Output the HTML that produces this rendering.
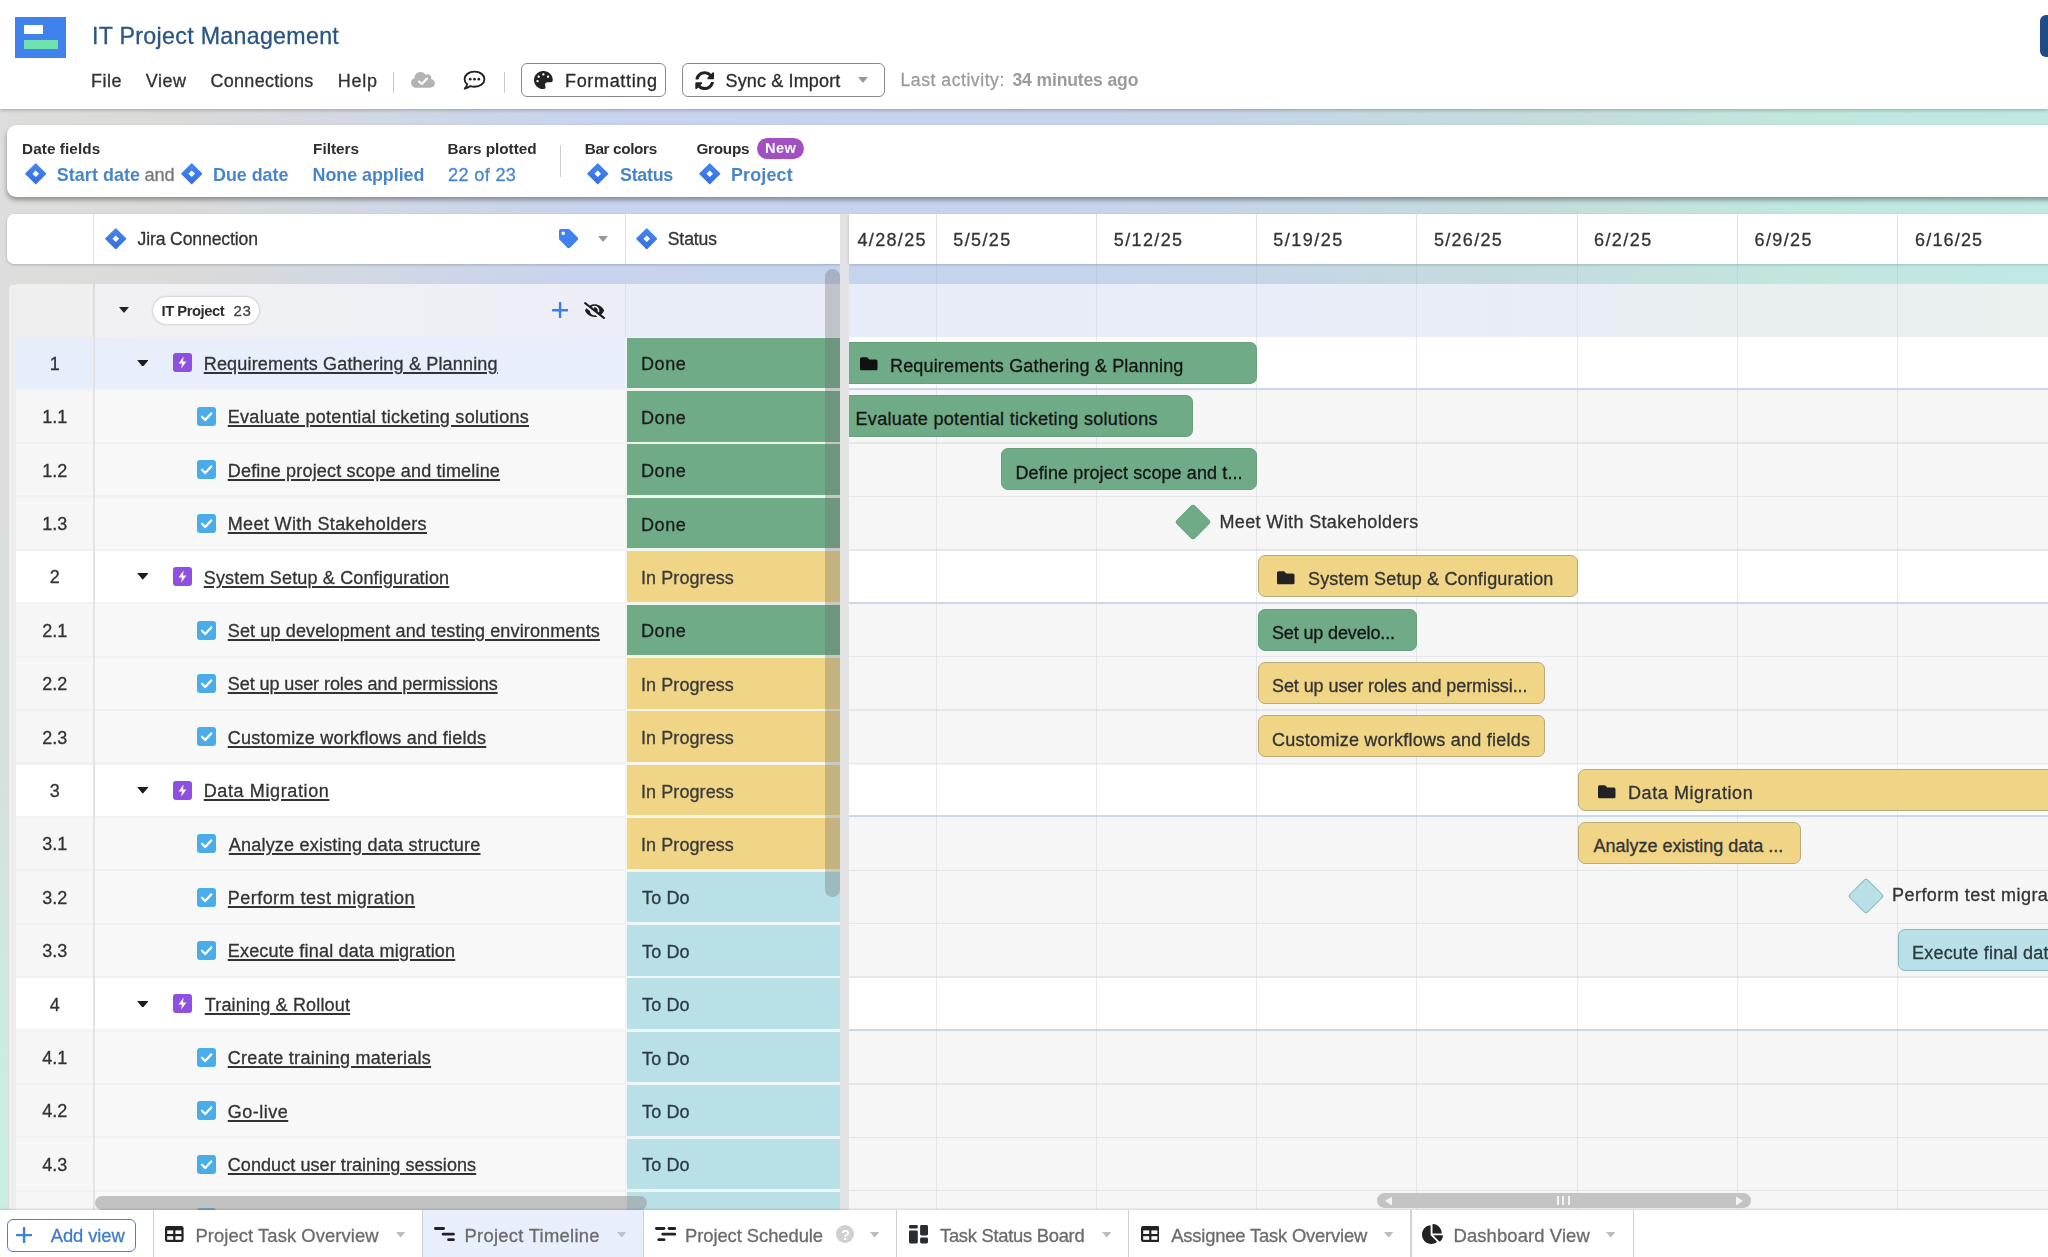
<!DOCTYPE html>
<html lang="en"><head><meta charset="utf-8"><title>IT Project Management</title>
<style>
html,body{margin:0;padding:0}
body{width:2048px;height:1257px;overflow:hidden;position:relative;font-family:"Liberation Sans",sans-serif;
background:linear-gradient(90deg,#dddddb 0%,#dadad9 9%,#d0d7e5 19%,#c8d4ed 28%,#c5d3ee 44%,#c5d5e8 60%,#c4dcdc 75%,#c1e6e0 88%,#c0e9e4 100%);}
span,a,div{box-sizing:border-box}
.u{text-decoration:underline;text-decoration-thickness:1.5px;text-underline-offset:2.1px}
</style></head><body><div id="app" style="position:absolute;left:0;top:0;width:2048px;height:1257px;opacity:0.999">
<svg width="0" height="0" style="position:absolute"><defs>
<linearGradient id="jg" x1="0" y1="0" x2="0" y2="1"><stop offset="0" stop-color="#4685ee"/><stop offset="1" stop-color="#3570dc"/></linearGradient>
</defs></svg>

<div style="position:absolute;left:0.00px;top:109.00px;width:8.00px;height:1101.00px;background:linear-gradient(180deg,#dedede 0%,#dcdcdc 30%,#d6e0da 55%,#cdeae0 80%,#c8eee2 100%);"></div>
<div style="position:absolute;left:0.00px;top:0.00px;width:2048.00px;height:108.60px;background:#fff;box-shadow:0 1px 4px rgba(0,0,0,0.28);"></div>
<div style="position:absolute;left:15.20px;top:16.60px;width:51.00px;height:41.40px;background:#3f82ee;"></div>
<div style="position:absolute;left:23.80px;top:25.40px;width:18.80px;height:8.80px;background:#fff;"></div>
<div style="position:absolute;left:23.80px;top:40.00px;width:33.80px;height:9.20px;background:#6fe0b0;"></div>
<span id="t1" style="-webkit-text-stroke:0.3px;position:absolute;left:92.00px;top:23.96px;line-height:24px;font-size:23.2px;font-weight:400;color:#2a5583;white-space:nowrap;letter-spacing:0.310px;">IT Project Management</span>
<span id="t2" style="-webkit-text-stroke:0.3px;position:absolute;left:91.00px;top:68.66px;line-height:24px;font-size:18px;font-weight:400;color:#333;white-space:nowrap;letter-spacing:0.533px;">File</span>
<span id="t3" style="-webkit-text-stroke:0.3px;position:absolute;left:145.75px;top:68.66px;line-height:24px;font-size:18px;font-weight:400;color:#333;white-space:nowrap;letter-spacing:0.534px;">View</span>
<span id="t4" style="-webkit-text-stroke:0.3px;position:absolute;left:210.50px;top:68.66px;line-height:24px;font-size:18px;font-weight:400;color:#333;white-space:nowrap;letter-spacing:0.280px;">Connections</span>
<span id="t5" style="-webkit-text-stroke:0.3px;position:absolute;left:337.75px;top:68.66px;line-height:24px;font-size:18px;font-weight:400;color:#333;white-space:nowrap;letter-spacing:0.733px;">Help</span>
<div style="position:absolute;left:392.80px;top:72.00px;width:1.20px;height:20.60px;background:#c9c9c9;"></div>
<div style="position:absolute;left:503.70px;top:72.00px;width:1.20px;height:20.60px;background:#c9c9c9;"></div>
<svg style="position:absolute;left:411.30px;top:70.90px;" width="23.90" height="17.80" viewBox="0 0 640 512" preserveAspectRatio="none"><path fill="#b3b3b3" d="M537.6 226.6c4.1-10.7 6.4-22.4 6.4-34.6 0-53-43-96-96-96-19.7 0-38.1 6-53.3 16.2C367 64.2 315.3 32 256 32c-88.4 0-160 71.6-160 160 0 2.7.1 5.4.2 8.1C40.2 219.8 0 273.2 0 336c0 79.5 64.5 144 144 144h368c70.7 0 128-57.3 128-128 0-61.9-44-113.6-102.4-125.4z"/><path d="M215 300 L290 375 L430 215" fill="none" stroke="#fff" stroke-width="58" stroke-linecap="round" stroke-linejoin="round"/></svg>
<svg style="position:absolute;left:463.00px;top:70.30px;" width="23.00" height="20.40" viewBox="0 0 23 20" preserveAspectRatio="none"><path d="M11.5 1.6 C17.3 1.6 21.4 5 21.4 9 C21.4 13 17.3 16.4 11.5 16.4 C10 16.4 8.6 16.2 7.4 15.8 C6 16.9 4 18 1.8 18.2 C3 17 3.9 15.4 4.2 14.1 C2.6 12.8 1.6 11 1.6 9 C1.6 5 5.700 1.6 11.5 1.6 Z" fill="none" stroke="#222" stroke-width="1.9" stroke-linejoin="round"/><circle cx="7.2" cy="9" r="1.35" fill="#222"/><circle cx="11.5" cy="9" r="1.35" fill="#222"/><circle cx="15.8" cy="9" r="1.35" fill="#222"/></svg>
<div style="position:absolute;left:521px;top:63.2px;width:144.6px;height:33.8px;border:1.3px solid #8a8a8a;border-radius:6px;background:#fff"></div>
<svg style="position:absolute;left:534.20px;top:71.00px;" width="18.80" height="18.20" viewBox="0 0 512 512" preserveAspectRatio="none"><path fill="#222" d="M204.3 5C104.900 24.4 24.8 104.300 5.2 203.400c-37 187 131.700 326.400 258.800 306.700 41.200-6.400 61.400-54.600 42.500-91.700-23.100-45.400 9.900-98.400 60.900-98.400h79.700c35.800 0 64.800-29.600 64.900-65.300C511.500 97.100 368.100-26.900 204.300 5zM96 320c-17.700 0-32-14.300-32-32s14.300-32 32-32 32 14.300 32 32-14.300 32-32 32zm32-128c-17.700 0-32-14.300-32-32s14.300-32 32-32 32 14.300 32 32-14.300 32-32 32zm128-64c-17.700 0-32-14.300-32-32s14.300-32 32-32 32 14.300 32 32-14.300 32-32 32zm128 64c-17.700 0-32-14.300-32-32s14.300-32 32-32 32 14.300 32 32-14.300 32-32 32z"/></svg>
<span id="t6" style="-webkit-text-stroke:0.3px;position:absolute;left:565.00px;top:68.66px;line-height:24px;font-size:18px;font-weight:400;color:#2b2b2b;white-space:nowrap;letter-spacing:0.667px;">Formatting</span>
<div style="position:absolute;left:682px;top:63.2px;width:203px;height:33.6px;border:1.3px solid #8a8a8a;border-radius:6px;background:#fff"></div>
<svg style="position:absolute;left:694.80px;top:70.60px;" width="19.40" height="19.40" viewBox="0 0 512 512" preserveAspectRatio="none"><path fill="#222" d="M370.72 133.280C339.458 104.008 298.888 87.962 255.848 88c-77.458.068-144.328 53.178-162.791 126.850-1.344 5.363-6.122 9.150-11.651 9.150H24.103c-7.498 0-13.194-6.807-11.807-14.176C33.933 94.924 134.813 8 256 8c66.448 0 126.791 26.136 171.315 68.685L463.030 40.970C478.149 25.851 504 36.559 504 57.941V192c0 13.255-10.745 24-24 24H345.941c-21.382 0-32.090-25.851-16.971-40.971l41.750-41.749zM32 296h134.059c21.382 0 32.090 25.851 16.971 40.971l-41.750 41.750c31.262 29.273 71.835 45.319 114.876 45.280 77.418-.070 144.315-53.144 162.787-126.849 1.344-5.363 6.122-9.150 11.651-9.150h57.304c7.498 0 13.194 6.807 11.807 14.176C478.067 417.076 377.187 504 256 504c-66.448 0-126.791-26.136-171.315-68.685L48.970 471.030C33.851 486.149 8 475.441 8 454.059V320c0-13.255 10.745-24 24-24z"/></svg>
<span id="t7" style="-webkit-text-stroke:0.3px;position:absolute;left:725.50px;top:68.66px;line-height:24px;font-size:18px;font-weight:400;color:#2b2b2b;white-space:nowrap;letter-spacing:0.150px;">Sync &amp; Import</span>
<svg style="position:absolute;left:857.50px;top:77.20px;" width="10.00" height="6.00" viewBox="0 0 10 6" preserveAspectRatio="none"><path d="M0.6 0 H9.4 Q10 0 9.6 0.5 L5.4 5.6 Q5 6 4.6 5.6 L0.4 0.5 Q0 0 0.6 0Z" fill="#999"/></svg>
<span id="t8" style="-webkit-text-stroke:0.3px;position:absolute;left:900.50px;top:67.90px;line-height:24px;font-size:17.6px;font-weight:400;color:#9b9b9b;white-space:nowrap;letter-spacing:0.538px;">Last activity:</span>
<span id="t9" style="position:absolute;left:1012.50px;top:67.90px;line-height:24px;font-size:17.6px;font-weight:700;color:#9b9b9b;white-space:nowrap;letter-spacing:-0.169px;">34 minutes ago</span>
<div style="position:absolute;left:2040.40px;top:15.20px;width:12.00px;height:41.40px;background:#1f4b87;border-radius:6px 0 0 6px;"></div>
<div style="position:absolute;left:6.8px;top:125.3px;width:2060px;height:72px;background:#fff;border-radius:9px;box-shadow:0 3px 5px rgba(0,0,0,0.36)"></div>
<span id="t10" style="position:absolute;left:22.00px;top:136.50px;line-height:24px;font-size:15.3px;font-weight:700;color:#2e2e2e;white-space:nowrap;letter-spacing:0.080px;">Date fields</span>
<svg style="position:absolute;left:24.85px;top:163.05px;" width="21.50" height="21.50" viewBox="0 0 24 24" preserveAspectRatio="none"><path d="M12 1 L23 12 L12 23 L1 12 Z" fill="url(#jg)" stroke="url(#jg)" stroke-width="1.6" stroke-linejoin="round"/><path d="M12 8.3 L15.7 12 L12 15.7 L8.3 12 Z" fill="#fff"/></svg>
<span id="t11" style="position:absolute;left:56.75px;top:162.70px;line-height:24px;font-size:17.9px;font-weight:700;color:#4885cb;white-space:nowrap;letter-spacing:0.089px;">Start date</span>
<span id="t12" style="-webkit-text-stroke:0.3px;position:absolute;left:144.50px;top:162.59px;line-height:24px;font-size:18.2px;font-weight:400;color:#777;white-space:nowrap;letter-spacing:-0.100px;">and</span>
<svg style="position:absolute;left:180.85px;top:163.05px;" width="21.50" height="21.50" viewBox="0 0 24 24" preserveAspectRatio="none"><path d="M12 1 L23 12 L12 23 L1 12 Z" fill="url(#jg)" stroke="url(#jg)" stroke-width="1.6" stroke-linejoin="round"/><path d="M12 8.3 L15.7 12 L12 15.7 L8.3 12 Z" fill="#fff"/></svg>
<span id="t13" style="position:absolute;left:213.00px;top:162.70px;line-height:24px;font-size:17.9px;font-weight:700;color:#4885cb;white-space:nowrap;letter-spacing:-0.028px;">Due date</span>
<span id="t14" style="position:absolute;left:313.00px;top:136.50px;line-height:24px;font-size:15.3px;font-weight:700;color:#2e2e2e;white-space:nowrap;letter-spacing:0.033px;">Filters</span>
<span id="t15" style="position:absolute;left:312.50px;top:162.70px;line-height:24px;font-size:17.9px;font-weight:700;color:#4885cb;white-space:nowrap;letter-spacing:-0.036px;">None applied</span>
<span id="t16" style="position:absolute;left:447.50px;top:136.50px;line-height:24px;font-size:15.3px;font-weight:700;color:#2e2e2e;white-space:nowrap;letter-spacing:-0.018px;">Bars plotted</span>
<span id="t17" style="-webkit-text-stroke:0.3px;position:absolute;left:448.00px;top:162.59px;line-height:24px;font-size:18.2px;font-weight:400;color:#4a86cf;white-space:nowrap;letter-spacing:0.314px;">22 of 23</span>
<div style="position:absolute;left:560.00px;top:145.40px;width:1.20px;height:31.60px;background:#cfcfcf;"></div>
<span id="t18" style="position:absolute;left:584.75px;top:136.50px;line-height:24px;font-size:15.3px;font-weight:700;color:#2e2e2e;white-space:nowrap;letter-spacing:-0.355px;">Bar colors</span>
<svg style="position:absolute;left:587.05px;top:163.05px;" width="21.50" height="21.50" viewBox="0 0 24 24" preserveAspectRatio="none"><path d="M12 1 L23 12 L12 23 L1 12 Z" fill="url(#jg)" stroke="url(#jg)" stroke-width="1.6" stroke-linejoin="round"/><path d="M12 8.3 L15.7 12 L12 15.7 L8.3 12 Z" fill="#fff"/></svg>
<span id="t19" style="position:absolute;left:620.00px;top:162.70px;line-height:24px;font-size:17.9px;font-weight:700;color:#4885cb;white-space:nowrap;letter-spacing:-0.280px;">Status</span>
<span id="t20" style="position:absolute;left:696.50px;top:136.50px;line-height:24px;font-size:15.3px;font-weight:700;color:#2e2e2e;white-space:nowrap;letter-spacing:-0.280px;">Groups</span>
<div style="position:absolute;left:757px;top:137.6px;width:46.8px;height:21.2px;border-radius:11px;background:#a24fc4"></div>
<span id="t21" style="position:absolute;left:765.00px;top:136.44px;line-height:24px;font-size:14.6px;font-weight:700;color:#fff;white-space:nowrap;letter-spacing:0.400px;">New</span>
<svg style="position:absolute;left:699.35px;top:163.05px;" width="21.50" height="21.50" viewBox="0 0 24 24" preserveAspectRatio="none"><path d="M12 1 L23 12 L12 23 L1 12 Z" fill="url(#jg)" stroke="url(#jg)" stroke-width="1.6" stroke-linejoin="round"/><path d="M12 8.3 L15.7 12 L12 15.7 L8.3 12 Z" fill="#fff"/></svg>
<span id="t22" style="position:absolute;left:731.00px;top:162.70px;line-height:24px;font-size:17.9px;font-weight:700;color:#4885cb;white-space:nowrap;letter-spacing:0.166px;">Project</span>
<div style="position:absolute;left:6.8px;top:213.6px;width:833.4px;height:50.4px;background:#fff;border-radius:7px 0 0 7px;box-shadow:0 1px 3px rgba(0,0,0,0.22)"></div>
<div style="position:absolute;left:93.30px;top:213.60px;width:1.20px;height:50.40px;background:#e2e2e2;"></div>
<div style="position:absolute;left:624.60px;top:213.60px;width:1.20px;height:50.40px;background:#e2e2e2;"></div>
<svg style="position:absolute;left:105.15px;top:227.95px;" width="21.50" height="21.50" viewBox="0 0 24 24" preserveAspectRatio="none"><path d="M12 1 L23 12 L12 23 L1 12 Z" fill="url(#jg)" stroke="url(#jg)" stroke-width="1.6" stroke-linejoin="round"/><path d="M12 8.3 L15.7 12 L12 15.7 L8.3 12 Z" fill="#fff"/></svg>
<span id="t23" style="-webkit-text-stroke:0.3px;position:absolute;left:137.50px;top:227.10px;line-height:24px;font-size:17.6px;font-weight:400;color:#333;white-space:nowrap;letter-spacing:-0.128px;">Jira Connection</span>
<svg style="position:absolute;left:558.60px;top:229.20px;" width="19.20" height="19.20" viewBox="0 0 512 512" preserveAspectRatio="none"><path fill="#3f82ee" d="M0 252.118V48C0 21.490 21.490 0 48 0h204.118a48 48 0 0 1 33.941 14.059l211.882 211.882c18.745 18.745 18.745 49.137 0 67.882L293.823 497.941c-18.745 18.745-49.137 18.745-67.882 0L14.059 286.059A48 48 0 0 1 0 252.118zM112 64c-26.510 0-48 21.490-48 48s21.490 48 48 48 48-21.490 48-48-21.490-48-48-48z"/></svg>
<svg style="position:absolute;left:598.00px;top:235.80px;" width="10.00" height="6.00" viewBox="0 0 10 6" preserveAspectRatio="none"><path d="M0.6 0 H9.4 Q10 0 9.6 0.5 L5.4 5.6 Q5 6 4.6 5.6 L0.4 0.5 Q0 0 0.6 0Z" fill="#999"/></svg>
<svg style="position:absolute;left:635.85px;top:227.95px;" width="21.50" height="21.50" viewBox="0 0 24 24" preserveAspectRatio="none"><path d="M12 1 L23 12 L12 23 L1 12 Z" fill="url(#jg)" stroke="url(#jg)" stroke-width="1.6" stroke-linejoin="round"/><path d="M12 8.3 L15.7 12 L12 15.7 L8.3 12 Z" fill="#fff"/></svg>
<span id="t24" style="-webkit-text-stroke:0.3px;position:absolute;left:667.75px;top:227.10px;line-height:24px;font-size:17.6px;font-weight:400;color:#333;white-space:nowrap;letter-spacing:-0.120px;">Status</span>
<div style="position:absolute;left:840.20px;top:213.60px;width:8.80px;height:1000.00px;background:#e3e3e5;"></div>
<div style="position:absolute;left:849px;top:213.6px;width:1210px;height:50.5px;background:#fff;box-shadow:0 1px 3px rgba(0,0,0,0.18)"></div>
<div style="position:absolute;left:936.00px;top:213.60px;width:1.00px;height:50.50px;background:#e2e2e5;"></div>
<div style="position:absolute;left:1096.00px;top:213.60px;width:1.00px;height:50.50px;background:#e2e2e5;"></div>
<div style="position:absolute;left:1256.00px;top:213.60px;width:1.00px;height:50.50px;background:#e2e2e5;"></div>
<div style="position:absolute;left:1416.00px;top:213.60px;width:1.00px;height:50.50px;background:#e2e2e5;"></div>
<div style="position:absolute;left:1577.00px;top:213.60px;width:1.00px;height:50.50px;background:#e2e2e5;"></div>
<div style="position:absolute;left:1737.00px;top:213.60px;width:1.00px;height:50.50px;background:#e2e2e5;"></div>
<div style="position:absolute;left:1897.00px;top:213.60px;width:1.00px;height:50.50px;background:#e2e2e5;"></div>
<div style="position:absolute;left:2057.00px;top:213.60px;width:1.00px;height:50.50px;background:#e2e2e5;"></div>
<span id="t25" style="-webkit-text-stroke:0.3px;position:absolute;left:857.50px;top:227.66px;line-height:24px;font-size:18px;font-weight:400;color:#333;white-space:nowrap;letter-spacing:1.333px;">4/28/25</span>
<span id="t26" style="-webkit-text-stroke:0.3px;position:absolute;left:953.25px;top:227.66px;line-height:24px;font-size:18px;font-weight:400;color:#333;white-space:nowrap;letter-spacing:1.400px;">5/5/25</span>
<span id="t27" style="-webkit-text-stroke:0.3px;position:absolute;left:1113.80px;top:227.66px;line-height:24px;font-size:18px;font-weight:400;color:#333;white-space:nowrap;letter-spacing:1.360px;">5/12/25</span>
<span id="t28" style="-webkit-text-stroke:0.3px;position:absolute;left:1273.35px;top:227.66px;line-height:24px;font-size:18px;font-weight:400;color:#333;white-space:nowrap;letter-spacing:1.487px;">5/19/25</span>
<span id="t29" style="-webkit-text-stroke:0.3px;position:absolute;left:1433.90px;top:227.66px;line-height:24px;font-size:18px;font-weight:400;color:#333;white-space:nowrap;letter-spacing:1.314px;">5/26/25</span>
<span id="t30" style="-webkit-text-stroke:0.3px;position:absolute;left:1593.95px;top:227.66px;line-height:24px;font-size:18px;font-weight:400;color:#333;white-space:nowrap;letter-spacing:1.448px;">6/2/25</span>
<span id="t31" style="-webkit-text-stroke:0.3px;position:absolute;left:1754.50px;top:227.66px;line-height:24px;font-size:18px;font-weight:400;color:#333;white-space:nowrap;letter-spacing:1.400px;">6/9/25</span>
<span id="t32" style="-webkit-text-stroke:0.3px;position:absolute;left:1915.05px;top:227.66px;line-height:24px;font-size:18px;font-weight:400;color:#333;white-space:nowrap;letter-spacing:1.160px;">6/16/25</span>
<div style="position:absolute;left:7.6px;top:283.9px;width:832.6px;height:930px;background:#eeeeee;border-radius:5px 0 0 0;border-left:1px solid #dcdcdc;border-top:1px solid #dcdcdc"></div>
<div style="position:absolute;left:15.60px;top:283.90px;width:78.00px;height:53.50px;background:#efefef;"></div>
<div style="position:absolute;left:94.00px;top:283.90px;width:531.00px;height:53.50px;background:linear-gradient(90deg,#f1f1f3 0%,#eff0f5 50%,#ebeef7 100%);"></div>
<div style="position:absolute;left:625.60px;top:283.90px;width:214.60px;height:53.50px;background:#e9edf8;"></div>
<div style="position:absolute;left:93.30px;top:283.90px;width:1.30px;height:53.50px;background:#dcdcdc;"></div>
<div style="position:absolute;left:624.60px;top:283.90px;width:1.30px;height:53.50px;background:#dcdfe6;"></div>
<svg style="position:absolute;left:119.20px;top:307.20px;" width="10.00" height="6.00" viewBox="0 0 10 6" preserveAspectRatio="none"><path d="M0.6 0 H9.4 Q10 0 9.6 0.5 L5.4 5.6 Q5 6 4.6 5.6 L0.4 0.5 Q0 0 0.6 0Z" fill="#222"/></svg>
<div style="position:absolute;left:153.3px;top:296.6px;width:106.2px;height:27.4px;border-radius:14px;background:#fff;box-shadow:0 0 2.5px rgba(0,0,0,0.3)"></div>
<span id="t33" style="position:absolute;left:161.50px;top:298.57px;line-height:24px;font-size:14.8px;font-weight:700;color:#2e2e2e;white-space:nowrap;letter-spacing:-0.467px;">IT Project</span>
<span id="t34" style="-webkit-text-stroke:0.3px;position:absolute;left:233.50px;top:298.50px;line-height:24px;font-size:15px;font-weight:400;color:#444;white-space:nowrap;letter-spacing:0.600px;">23</span>
<svg style="position:absolute;left:552.20px;top:302.00px;" width="16.20" height="16.40" viewBox="0 0 16 16" preserveAspectRatio="none"><path d="M8 1 V15 M1 8 H15" stroke="#3c7fdd" stroke-width="2.4" stroke-linecap="round"/></svg>
<svg style="position:absolute;left:584.40px;top:301.80px;" width="21.20" height="17.20" viewBox="0 0 640 512" preserveAspectRatio="none"><path fill="#1d1d1d" d="M320 400c-75.850 0-137.250-58.710-142.900-133.110L72.200 185.820c-13.790 17.300-26.480 35.590-36.720 55.590a32.350 32.350 0 0 0 0 29.190C89.710 376.410 197.070 448 320 448c26.910 0 52.870-4 77.890-10.460L346 397.390a144.130 144.130 0 0 1-26 2.610zm313.820 58.100l-110.550-85.440a331.250 331.250 0 0 0 81.250-102.070 32.350 32.350 0 0 0 0-29.190C550.290 135.590 442.930 64 320 64a308.150 308.150 0 0 0-147.320 37.700L45.460 3.370A16 16 0 0 0 23 6.180L3.370 31.450A16 16 0 0 0 6.180 53.900l588.360 454.730a16 16 0 0 0 22.460-2.810l19.640-25.270a16 16 0 0 0-2.820-22.450zm-183.720-142l-39.300-30.380A94.750 94.750 0 0 0 416 256a94.760 94.760 0 0 0-121.310-92.210A47.650 47.650 0 0 1 304 192a46.640 46.640 0 0 1-1.540 10l-73.610-56.890A142.310 142.310 0 0 1 320 112a143.920 143.920 0 0 1 144 144c0 21.630-5.290 41.790-13.900 60.110z"/></svg>
<div style="position:absolute;left:15.60px;top:337.40px;width:610.50px;height:53.40px;background:#f3f3f3;"></div>
<div style="position:absolute;left:15.60px;top:337.40px;width:77.70px;height:51.20px;background:#e6edfb;"></div>
<div style="position:absolute;left:94.60px;top:337.40px;width:530.60px;height:51.20px;background:#e8eefc;"></div>
<div style="position:absolute;left:93.30px;top:337.40px;width:1.30px;height:53.40px;background:#e3e3e3;"></div>
<div style="position:absolute;left:625.60px;top:337.40px;width:214.60px;height:53.40px;background:#eef6ee;"></div>
<div style="position:absolute;left:627.00px;top:337.60px;width:213.20px;height:50.50px;background:#6fab86;"></div>
<span id="t35" style="-webkit-text-stroke:0.3px;position:absolute;left:54.70px;top:351.76px;line-height:24px;font-size:18px;font-weight:400;color:#333;white-space:nowrap;letter-spacing:0.000px;transform:translateX(-50%);">1</span>
<span id="t36" style="-webkit-text-stroke:0.3px;position:absolute;left:641.00px;top:352.36px;line-height:24px;font-size:18px;font-weight:400;color:#1c1c1c;white-space:nowrap;letter-spacing:0.600px;">Done</span>
<svg style="position:absolute;left:136.80px;top:359.70px;" width="11.60" height="6.80" viewBox="0 0 10 6" preserveAspectRatio="none"><path d="M0.6 0 H9.4 Q10 0 9.6 0.5 L5.4 5.6 Q5 6 4.6 5.6 L0.4 0.5 Q0 0 0.6 0Z" fill="#1d1d1d"/></svg>
<svg style="position:absolute;left:173.30px;top:353.40px;" width="19.00" height="19.00" viewBox="0 0 19 19" preserveAspectRatio="none"><rect width="19" height="19" rx="3" fill="#8f4fe0"/><path d="M10.6 3.6 L5.6 10.4 H9 L8.2 15.4 L13.4 8.400 H10 Z" fill="#fff"/></svg>
<a class="u" id="t37" style="-webkit-text-stroke:0.3px;position:absolute;left:203.75px;top:352.06px;line-height:24px;font-size:18px;font-weight:400;color:#333;white-space:nowrap;letter-spacing:0.175px;">Requirements Gathering &amp; Planning</a>
<div style="position:absolute;left:15.60px;top:390.80px;width:610.50px;height:53.40px;background:#f1f1f1;"></div>
<div style="position:absolute;left:15.60px;top:390.80px;width:77.70px;height:51.20px;background:#f6f6f6;"></div>
<div style="position:absolute;left:94.60px;top:390.80px;width:530.60px;height:51.20px;background:#f8f8f8;"></div>
<div style="position:absolute;left:93.30px;top:390.80px;width:1.30px;height:53.40px;background:#e3e3e3;"></div>
<div style="position:absolute;left:625.60px;top:390.80px;width:214.60px;height:53.40px;background:#eef6ee;"></div>
<div style="position:absolute;left:627.00px;top:391.00px;width:213.20px;height:50.50px;background:#6fab86;"></div>
<span id="t38" style="-webkit-text-stroke:0.3px;position:absolute;left:54.70px;top:405.16px;line-height:24px;font-size:18px;font-weight:400;color:#333;white-space:nowrap;letter-spacing:0.000px;transform:translateX(-50%);">1.1</span>
<span id="t39" style="-webkit-text-stroke:0.3px;position:absolute;left:641.00px;top:405.76px;line-height:24px;font-size:18px;font-weight:400;color:#1c1c1c;white-space:nowrap;letter-spacing:0.600px;">Done</span>
<svg style="position:absolute;left:197.30px;top:407.00px;" width="19.00" height="19.00" viewBox="0 0 19 19" preserveAspectRatio="none"><rect width="19" height="19" rx="3" fill="#4bade8"/><path d="M5 9.800 L8.2 13 L14.2 6.400" fill="none" stroke="#fff" stroke-width="2.3" stroke-linecap="round" stroke-linejoin="round"/></svg>
<a class="u" id="t40" style="-webkit-text-stroke:0.3px;position:absolute;left:227.75px;top:405.46px;line-height:24px;font-size:18px;font-weight:400;color:#333;white-space:nowrap;letter-spacing:0.292px;">Evaluate potential ticketing solutions</a>
<div style="position:absolute;left:15.60px;top:444.20px;width:610.50px;height:53.40px;background:#f1f1f1;"></div>
<div style="position:absolute;left:15.60px;top:444.20px;width:77.70px;height:51.20px;background:#f6f6f6;"></div>
<div style="position:absolute;left:94.60px;top:444.20px;width:530.60px;height:51.20px;background:#f8f8f8;"></div>
<div style="position:absolute;left:93.30px;top:444.20px;width:1.30px;height:53.40px;background:#e3e3e3;"></div>
<div style="position:absolute;left:625.60px;top:444.20px;width:214.60px;height:53.40px;background:#eef6ee;"></div>
<div style="position:absolute;left:627.00px;top:444.40px;width:213.20px;height:50.50px;background:#6fab86;"></div>
<span id="t41" style="-webkit-text-stroke:0.3px;position:absolute;left:54.70px;top:458.56px;line-height:24px;font-size:18px;font-weight:400;color:#333;white-space:nowrap;letter-spacing:0.000px;transform:translateX(-50%);">1.2</span>
<span id="t42" style="-webkit-text-stroke:0.3px;position:absolute;left:641.00px;top:459.16px;line-height:24px;font-size:18px;font-weight:400;color:#1c1c1c;white-space:nowrap;letter-spacing:0.600px;">Done</span>
<svg style="position:absolute;left:197.30px;top:460.40px;" width="19.00" height="19.00" viewBox="0 0 19 19" preserveAspectRatio="none"><rect width="19" height="19" rx="3" fill="#4bade8"/><path d="M5 9.800 L8.2 13 L14.2 6.400" fill="none" stroke="#fff" stroke-width="2.3" stroke-linecap="round" stroke-linejoin="round"/></svg>
<a class="u" id="t43" style="-webkit-text-stroke:0.3px;position:absolute;left:227.75px;top:458.86px;line-height:24px;font-size:18px;font-weight:400;color:#333;white-space:nowrap;letter-spacing:0.187px;">Define project scope and timeline</a>
<div style="position:absolute;left:15.60px;top:497.60px;width:610.50px;height:53.40px;background:#f1f1f1;"></div>
<div style="position:absolute;left:15.60px;top:497.60px;width:77.70px;height:51.20px;background:#f6f6f6;"></div>
<div style="position:absolute;left:94.60px;top:497.60px;width:530.60px;height:51.20px;background:#f8f8f8;"></div>
<div style="position:absolute;left:93.30px;top:497.60px;width:1.30px;height:53.40px;background:#e3e3e3;"></div>
<div style="position:absolute;left:625.60px;top:497.60px;width:214.60px;height:53.40px;background:#eef6ee;"></div>
<div style="position:absolute;left:627.00px;top:497.80px;width:213.20px;height:50.50px;background:#6fab86;"></div>
<span id="t44" style="-webkit-text-stroke:0.3px;position:absolute;left:54.70px;top:511.96px;line-height:24px;font-size:18px;font-weight:400;color:#333;white-space:nowrap;letter-spacing:0.000px;transform:translateX(-50%);">1.3</span>
<span id="t45" style="-webkit-text-stroke:0.3px;position:absolute;left:641.00px;top:512.56px;line-height:24px;font-size:18px;font-weight:400;color:#1c1c1c;white-space:nowrap;letter-spacing:0.600px;">Done</span>
<svg style="position:absolute;left:197.30px;top:513.80px;" width="19.00" height="19.00" viewBox="0 0 19 19" preserveAspectRatio="none"><rect width="19" height="19" rx="3" fill="#4bade8"/><path d="M5 9.800 L8.2 13 L14.2 6.400" fill="none" stroke="#fff" stroke-width="2.3" stroke-linecap="round" stroke-linejoin="round"/></svg>
<a class="u" id="t46" style="-webkit-text-stroke:0.3px;position:absolute;left:227.75px;top:512.26px;line-height:24px;font-size:18px;font-weight:400;color:#333;white-space:nowrap;letter-spacing:0.371px;">Meet With Stakeholders</a>
<div style="position:absolute;left:15.60px;top:551.00px;width:610.50px;height:53.40px;background:#f3f3f3;"></div>
<div style="position:absolute;left:15.60px;top:551.00px;width:77.70px;height:51.20px;background:#ffffff;"></div>
<div style="position:absolute;left:94.60px;top:551.00px;width:530.60px;height:51.20px;background:#ffffff;"></div>
<div style="position:absolute;left:93.30px;top:551.00px;width:1.30px;height:53.40px;background:#e3e3e3;"></div>
<div style="position:absolute;left:625.60px;top:551.00px;width:214.60px;height:53.40px;background:#f6f6ec;"></div>
<div style="position:absolute;left:627.00px;top:551.20px;width:213.20px;height:50.50px;background:#f0d586;"></div>
<span id="t47" style="-webkit-text-stroke:0.3px;position:absolute;left:54.70px;top:565.36px;line-height:24px;font-size:18px;font-weight:400;color:#333;white-space:nowrap;letter-spacing:0.000px;transform:translateX(-50%);">2</span>
<span id="t48" style="-webkit-text-stroke:0.3px;position:absolute;left:641.00px;top:565.96px;line-height:24px;font-size:18px;font-weight:400;color:#3a3a3a;white-space:nowrap;letter-spacing:0.080px;">In Progress</span>
<svg style="position:absolute;left:136.80px;top:573.30px;" width="11.60" height="6.80" viewBox="0 0 10 6" preserveAspectRatio="none"><path d="M0.6 0 H9.4 Q10 0 9.6 0.5 L5.4 5.6 Q5 6 4.6 5.6 L0.4 0.5 Q0 0 0.6 0Z" fill="#1d1d1d"/></svg>
<svg style="position:absolute;left:173.30px;top:567.00px;" width="19.00" height="19.00" viewBox="0 0 19 19" preserveAspectRatio="none"><rect width="19" height="19" rx="3" fill="#8f4fe0"/><path d="M10.6 3.6 L5.6 10.4 H9 L8.2 15.4 L13.4 8.400 H10 Z" fill="#fff"/></svg>
<a class="u" id="t49" style="-webkit-text-stroke:0.3px;position:absolute;left:203.75px;top:565.66px;line-height:24px;font-size:18px;font-weight:400;color:#333;white-space:nowrap;letter-spacing:0.155px;">System Setup &amp; Configuration</a>
<div style="position:absolute;left:15.60px;top:604.40px;width:610.50px;height:53.40px;background:#f1f1f1;"></div>
<div style="position:absolute;left:15.60px;top:604.40px;width:77.70px;height:51.20px;background:#f6f6f6;"></div>
<div style="position:absolute;left:94.60px;top:604.40px;width:530.60px;height:51.20px;background:#f8f8f8;"></div>
<div style="position:absolute;left:93.30px;top:604.40px;width:1.30px;height:53.40px;background:#e3e3e3;"></div>
<div style="position:absolute;left:625.60px;top:604.40px;width:214.60px;height:53.40px;background:#eef6ee;"></div>
<div style="position:absolute;left:627.00px;top:604.60px;width:213.20px;height:50.50px;background:#6fab86;"></div>
<span id="t50" style="-webkit-text-stroke:0.3px;position:absolute;left:54.70px;top:618.76px;line-height:24px;font-size:18px;font-weight:400;color:#333;white-space:nowrap;letter-spacing:0.000px;transform:translateX(-50%);">2.1</span>
<span id="t51" style="-webkit-text-stroke:0.3px;position:absolute;left:641.00px;top:619.36px;line-height:24px;font-size:18px;font-weight:400;color:#1c1c1c;white-space:nowrap;letter-spacing:0.600px;">Done</span>
<svg style="position:absolute;left:197.30px;top:620.60px;" width="19.00" height="19.00" viewBox="0 0 19 19" preserveAspectRatio="none"><rect width="19" height="19" rx="3" fill="#4bade8"/><path d="M5 9.800 L8.2 13 L14.2 6.400" fill="none" stroke="#fff" stroke-width="2.3" stroke-linecap="round" stroke-linejoin="round"/></svg>
<a class="u" id="t52" style="-webkit-text-stroke:0.3px;position:absolute;left:227.75px;top:619.06px;line-height:24px;font-size:18px;font-weight:400;color:#333;white-space:nowrap;letter-spacing:0.138px;">Set up development and testing environments</a>
<div style="position:absolute;left:15.60px;top:657.80px;width:610.50px;height:53.40px;background:#f1f1f1;"></div>
<div style="position:absolute;left:15.60px;top:657.80px;width:77.70px;height:51.20px;background:#f6f6f6;"></div>
<div style="position:absolute;left:94.60px;top:657.80px;width:530.60px;height:51.20px;background:#f8f8f8;"></div>
<div style="position:absolute;left:93.30px;top:657.80px;width:1.30px;height:53.40px;background:#e3e3e3;"></div>
<div style="position:absolute;left:625.60px;top:657.80px;width:214.60px;height:53.40px;background:#f6f6ec;"></div>
<div style="position:absolute;left:627.00px;top:658.00px;width:213.20px;height:50.50px;background:#f0d586;"></div>
<span id="t53" style="-webkit-text-stroke:0.3px;position:absolute;left:54.70px;top:672.16px;line-height:24px;font-size:18px;font-weight:400;color:#333;white-space:nowrap;letter-spacing:0.000px;transform:translateX(-50%);">2.2</span>
<span id="t54" style="-webkit-text-stroke:0.3px;position:absolute;left:641.00px;top:672.76px;line-height:24px;font-size:18px;font-weight:400;color:#3a3a3a;white-space:nowrap;letter-spacing:0.080px;">In Progress</span>
<svg style="position:absolute;left:197.30px;top:674.00px;" width="19.00" height="19.00" viewBox="0 0 19 19" preserveAspectRatio="none"><rect width="19" height="19" rx="3" fill="#4bade8"/><path d="M5 9.800 L8.2 13 L14.2 6.400" fill="none" stroke="#fff" stroke-width="2.3" stroke-linecap="round" stroke-linejoin="round"/></svg>
<a class="u" id="t55" style="-webkit-text-stroke:0.3px;position:absolute;left:227.75px;top:672.46px;line-height:24px;font-size:18px;font-weight:400;color:#333;white-space:nowrap;letter-spacing:-0.069px;">Set up user roles and permissions</a>
<div style="position:absolute;left:15.60px;top:711.20px;width:610.50px;height:53.40px;background:#f1f1f1;"></div>
<div style="position:absolute;left:15.60px;top:711.20px;width:77.70px;height:51.20px;background:#f6f6f6;"></div>
<div style="position:absolute;left:94.60px;top:711.20px;width:530.60px;height:51.20px;background:#f8f8f8;"></div>
<div style="position:absolute;left:93.30px;top:711.20px;width:1.30px;height:53.40px;background:#e3e3e3;"></div>
<div style="position:absolute;left:625.60px;top:711.20px;width:214.60px;height:53.40px;background:#f6f6ec;"></div>
<div style="position:absolute;left:627.00px;top:711.40px;width:213.20px;height:50.50px;background:#f0d586;"></div>
<span id="t56" style="-webkit-text-stroke:0.3px;position:absolute;left:54.70px;top:725.56px;line-height:24px;font-size:18px;font-weight:400;color:#333;white-space:nowrap;letter-spacing:0.000px;transform:translateX(-50%);">2.3</span>
<span id="t57" style="-webkit-text-stroke:0.3px;position:absolute;left:641.00px;top:726.16px;line-height:24px;font-size:18px;font-weight:400;color:#3a3a3a;white-space:nowrap;letter-spacing:0.080px;">In Progress</span>
<svg style="position:absolute;left:197.30px;top:727.40px;" width="19.00" height="19.00" viewBox="0 0 19 19" preserveAspectRatio="none"><rect width="19" height="19" rx="3" fill="#4bade8"/><path d="M5 9.800 L8.2 13 L14.2 6.400" fill="none" stroke="#fff" stroke-width="2.3" stroke-linecap="round" stroke-linejoin="round"/></svg>
<a class="u" id="t58" style="-webkit-text-stroke:0.3px;position:absolute;left:227.75px;top:725.86px;line-height:24px;font-size:18px;font-weight:400;color:#333;white-space:nowrap;letter-spacing:0.248px;">Customize workflows and fields</a>
<div style="position:absolute;left:15.60px;top:764.60px;width:610.50px;height:53.40px;background:#f3f3f3;"></div>
<div style="position:absolute;left:15.60px;top:764.60px;width:77.70px;height:51.20px;background:#ffffff;"></div>
<div style="position:absolute;left:94.60px;top:764.60px;width:530.60px;height:51.20px;background:#ffffff;"></div>
<div style="position:absolute;left:93.30px;top:764.60px;width:1.30px;height:53.40px;background:#e3e3e3;"></div>
<div style="position:absolute;left:625.60px;top:764.60px;width:214.60px;height:53.40px;background:#f6f6ec;"></div>
<div style="position:absolute;left:627.00px;top:764.80px;width:213.20px;height:50.50px;background:#f0d586;"></div>
<span id="t59" style="-webkit-text-stroke:0.3px;position:absolute;left:54.70px;top:778.96px;line-height:24px;font-size:18px;font-weight:400;color:#333;white-space:nowrap;letter-spacing:0.000px;transform:translateX(-50%);">3</span>
<span id="t60" style="-webkit-text-stroke:0.3px;position:absolute;left:641.00px;top:779.56px;line-height:24px;font-size:18px;font-weight:400;color:#3a3a3a;white-space:nowrap;letter-spacing:0.080px;">In Progress</span>
<svg style="position:absolute;left:136.80px;top:786.90px;" width="11.60" height="6.80" viewBox="0 0 10 6" preserveAspectRatio="none"><path d="M0.6 0 H9.4 Q10 0 9.6 0.5 L5.4 5.6 Q5 6 4.6 5.6 L0.4 0.5 Q0 0 0.6 0Z" fill="#1d1d1d"/></svg>
<svg style="position:absolute;left:173.30px;top:780.60px;" width="19.00" height="19.00" viewBox="0 0 19 19" preserveAspectRatio="none"><rect width="19" height="19" rx="3" fill="#8f4fe0"/><path d="M10.6 3.6 L5.6 10.4 H9 L8.2 15.4 L13.4 8.400 H10 Z" fill="#fff"/></svg>
<a class="u" id="t61" style="-webkit-text-stroke:0.3px;position:absolute;left:203.75px;top:779.26px;line-height:24px;font-size:18px;font-weight:400;color:#333;white-space:nowrap;letter-spacing:0.615px;">Data Migration</a>
<div style="position:absolute;left:15.60px;top:818.00px;width:610.50px;height:53.40px;background:#f1f1f1;"></div>
<div style="position:absolute;left:15.60px;top:818.00px;width:77.70px;height:51.20px;background:#f6f6f6;"></div>
<div style="position:absolute;left:94.60px;top:818.00px;width:530.60px;height:51.20px;background:#f8f8f8;"></div>
<div style="position:absolute;left:93.30px;top:818.00px;width:1.30px;height:53.40px;background:#e3e3e3;"></div>
<div style="position:absolute;left:625.60px;top:818.00px;width:214.60px;height:53.40px;background:#f6f6ec;"></div>
<div style="position:absolute;left:627.00px;top:818.20px;width:213.20px;height:50.50px;background:#f0d586;"></div>
<span id="t62" style="-webkit-text-stroke:0.3px;position:absolute;left:54.70px;top:832.36px;line-height:24px;font-size:18px;font-weight:400;color:#333;white-space:nowrap;letter-spacing:0.000px;transform:translateX(-50%);">3.1</span>
<span id="t63" style="-webkit-text-stroke:0.3px;position:absolute;left:641.00px;top:832.96px;line-height:24px;font-size:18px;font-weight:400;color:#3a3a3a;white-space:nowrap;letter-spacing:0.080px;">In Progress</span>
<svg style="position:absolute;left:197.30px;top:834.20px;" width="19.00" height="19.00" viewBox="0 0 19 19" preserveAspectRatio="none"><rect width="19" height="19" rx="3" fill="#4bade8"/><path d="M5 9.800 L8.2 13 L14.2 6.400" fill="none" stroke="#fff" stroke-width="2.3" stroke-linecap="round" stroke-linejoin="round"/></svg>
<a class="u" id="t64" style="-webkit-text-stroke:0.3px;position:absolute;left:228.75px;top:832.66px;line-height:24px;font-size:18px;font-weight:400;color:#333;white-space:nowrap;letter-spacing:0.213px;">Analyze existing data structure</a>
<div style="position:absolute;left:15.60px;top:871.40px;width:610.50px;height:53.40px;background:#f1f1f1;"></div>
<div style="position:absolute;left:15.60px;top:871.40px;width:77.70px;height:51.20px;background:#f6f6f6;"></div>
<div style="position:absolute;left:94.60px;top:871.40px;width:530.60px;height:51.20px;background:#f8f8f8;"></div>
<div style="position:absolute;left:93.30px;top:871.40px;width:1.30px;height:53.40px;background:#e3e3e3;"></div>
<div style="position:absolute;left:625.60px;top:871.40px;width:214.60px;height:53.40px;background:#eef6f8;"></div>
<div style="position:absolute;left:627.00px;top:871.60px;width:213.20px;height:50.50px;background:#b8e0e6;"></div>
<span id="t65" style="-webkit-text-stroke:0.3px;position:absolute;left:54.70px;top:885.76px;line-height:24px;font-size:18px;font-weight:400;color:#333;white-space:nowrap;letter-spacing:0.000px;transform:translateX(-50%);">3.2</span>
<span id="t66" style="-webkit-text-stroke:0.3px;position:absolute;left:642.00px;top:886.36px;line-height:24px;font-size:18px;font-weight:400;color:#2d3b43;white-space:nowrap;letter-spacing:0.150px;">To Do</span>
<svg style="position:absolute;left:197.30px;top:887.60px;" width="19.00" height="19.00" viewBox="0 0 19 19" preserveAspectRatio="none"><rect width="19" height="19" rx="3" fill="#4bade8"/><path d="M5 9.800 L8.2 13 L14.2 6.400" fill="none" stroke="#fff" stroke-width="2.3" stroke-linecap="round" stroke-linejoin="round"/></svg>
<a class="u" id="t67" style="-webkit-text-stroke:0.3px;position:absolute;left:227.75px;top:886.06px;line-height:24px;font-size:18px;font-weight:400;color:#333;white-space:nowrap;letter-spacing:0.467px;">Perform test migration</a>
<div style="position:absolute;left:15.60px;top:924.80px;width:610.50px;height:53.40px;background:#f1f1f1;"></div>
<div style="position:absolute;left:15.60px;top:924.80px;width:77.70px;height:51.20px;background:#f6f6f6;"></div>
<div style="position:absolute;left:94.60px;top:924.80px;width:530.60px;height:51.20px;background:#f8f8f8;"></div>
<div style="position:absolute;left:93.30px;top:924.80px;width:1.30px;height:53.40px;background:#e3e3e3;"></div>
<div style="position:absolute;left:625.60px;top:924.80px;width:214.60px;height:53.40px;background:#eef6f8;"></div>
<div style="position:absolute;left:627.00px;top:925.00px;width:213.20px;height:50.50px;background:#b8e0e6;"></div>
<span id="t68" style="-webkit-text-stroke:0.3px;position:absolute;left:54.70px;top:939.16px;line-height:24px;font-size:18px;font-weight:400;color:#333;white-space:nowrap;letter-spacing:0.000px;transform:translateX(-50%);">3.3</span>
<span id="t69" style="-webkit-text-stroke:0.3px;position:absolute;left:642.00px;top:939.76px;line-height:24px;font-size:18px;font-weight:400;color:#2d3b43;white-space:nowrap;letter-spacing:0.150px;">To Do</span>
<svg style="position:absolute;left:197.30px;top:941.00px;" width="19.00" height="19.00" viewBox="0 0 19 19" preserveAspectRatio="none"><rect width="19" height="19" rx="3" fill="#4bade8"/><path d="M5 9.800 L8.2 13 L14.2 6.400" fill="none" stroke="#fff" stroke-width="2.3" stroke-linecap="round" stroke-linejoin="round"/></svg>
<a class="u" id="t70" style="-webkit-text-stroke:0.3px;position:absolute;left:227.75px;top:939.46px;line-height:24px;font-size:18px;font-weight:400;color:#333;white-space:nowrap;letter-spacing:0.193px;">Execute final data migration</a>
<div style="position:absolute;left:15.60px;top:978.20px;width:610.50px;height:53.40px;background:#f3f3f3;"></div>
<div style="position:absolute;left:15.60px;top:978.20px;width:77.70px;height:51.20px;background:#ffffff;"></div>
<div style="position:absolute;left:94.60px;top:978.20px;width:530.60px;height:51.20px;background:#ffffff;"></div>
<div style="position:absolute;left:93.30px;top:978.20px;width:1.30px;height:53.40px;background:#e3e3e3;"></div>
<div style="position:absolute;left:625.60px;top:978.20px;width:214.60px;height:53.40px;background:#eef6f8;"></div>
<div style="position:absolute;left:627.00px;top:978.40px;width:213.20px;height:50.50px;background:#b8e0e6;"></div>
<span id="t71" style="-webkit-text-stroke:0.3px;position:absolute;left:54.70px;top:992.56px;line-height:24px;font-size:18px;font-weight:400;color:#333;white-space:nowrap;letter-spacing:0.000px;transform:translateX(-50%);">4</span>
<span id="t72" style="-webkit-text-stroke:0.3px;position:absolute;left:642.00px;top:993.16px;line-height:24px;font-size:18px;font-weight:400;color:#2d3b43;white-space:nowrap;letter-spacing:0.150px;">To Do</span>
<svg style="position:absolute;left:136.80px;top:1000.50px;" width="11.60" height="6.80" viewBox="0 0 10 6" preserveAspectRatio="none"><path d="M0.6 0 H9.4 Q10 0 9.6 0.5 L5.4 5.6 Q5 6 4.6 5.6 L0.4 0.5 Q0 0 0.6 0Z" fill="#1d1d1d"/></svg>
<svg style="position:absolute;left:173.30px;top:994.20px;" width="19.00" height="19.00" viewBox="0 0 19 19" preserveAspectRatio="none"><rect width="19" height="19" rx="3" fill="#8f4fe0"/><path d="M10.6 3.6 L5.6 10.4 H9 L8.2 15.4 L13.4 8.400 H10 Z" fill="#fff"/></svg>
<a class="u" id="t73" style="-webkit-text-stroke:0.3px;position:absolute;left:204.75px;top:992.86px;line-height:24px;font-size:18px;font-weight:400;color:#333;white-space:nowrap;letter-spacing:0.165px;">Training &amp; Rollout</a>
<div style="position:absolute;left:15.60px;top:1031.60px;width:610.50px;height:53.40px;background:#f1f1f1;"></div>
<div style="position:absolute;left:15.60px;top:1031.60px;width:77.70px;height:51.20px;background:#f6f6f6;"></div>
<div style="position:absolute;left:94.60px;top:1031.60px;width:530.60px;height:51.20px;background:#f8f8f8;"></div>
<div style="position:absolute;left:93.30px;top:1031.60px;width:1.30px;height:53.40px;background:#e3e3e3;"></div>
<div style="position:absolute;left:625.60px;top:1031.60px;width:214.60px;height:53.40px;background:#eef6f8;"></div>
<div style="position:absolute;left:627.00px;top:1031.80px;width:213.20px;height:50.50px;background:#b8e0e6;"></div>
<span id="t74" style="-webkit-text-stroke:0.3px;position:absolute;left:54.70px;top:1045.96px;line-height:24px;font-size:18px;font-weight:400;color:#333;white-space:nowrap;letter-spacing:0.000px;transform:translateX(-50%);">4.1</span>
<span id="t75" style="-webkit-text-stroke:0.3px;position:absolute;left:642.00px;top:1046.56px;line-height:24px;font-size:18px;font-weight:400;color:#2d3b43;white-space:nowrap;letter-spacing:0.150px;">To Do</span>
<svg style="position:absolute;left:197.30px;top:1047.80px;" width="19.00" height="19.00" viewBox="0 0 19 19" preserveAspectRatio="none"><rect width="19" height="19" rx="3" fill="#4bade8"/><path d="M5 9.800 L8.2 13 L14.2 6.400" fill="none" stroke="#fff" stroke-width="2.3" stroke-linecap="round" stroke-linejoin="round"/></svg>
<a class="u" id="t76" style="-webkit-text-stroke:0.3px;position:absolute;left:227.75px;top:1046.26px;line-height:24px;font-size:18px;font-weight:400;color:#333;white-space:nowrap;letter-spacing:0.291px;">Create training materials</a>
<div style="position:absolute;left:15.60px;top:1085.00px;width:610.50px;height:53.40px;background:#f1f1f1;"></div>
<div style="position:absolute;left:15.60px;top:1085.00px;width:77.70px;height:51.20px;background:#f6f6f6;"></div>
<div style="position:absolute;left:94.60px;top:1085.00px;width:530.60px;height:51.20px;background:#f8f8f8;"></div>
<div style="position:absolute;left:93.30px;top:1085.00px;width:1.30px;height:53.40px;background:#e3e3e3;"></div>
<div style="position:absolute;left:625.60px;top:1085.00px;width:214.60px;height:53.40px;background:#eef6f8;"></div>
<div style="position:absolute;left:627.00px;top:1085.20px;width:213.20px;height:50.50px;background:#b8e0e6;"></div>
<span id="t77" style="-webkit-text-stroke:0.3px;position:absolute;left:54.70px;top:1099.36px;line-height:24px;font-size:18px;font-weight:400;color:#333;white-space:nowrap;letter-spacing:0.000px;transform:translateX(-50%);">4.2</span>
<span id="t78" style="-webkit-text-stroke:0.3px;position:absolute;left:642.00px;top:1099.96px;line-height:24px;font-size:18px;font-weight:400;color:#2d3b43;white-space:nowrap;letter-spacing:0.150px;">To Do</span>
<svg style="position:absolute;left:197.30px;top:1101.20px;" width="19.00" height="19.00" viewBox="0 0 19 19" preserveAspectRatio="none"><rect width="19" height="19" rx="3" fill="#4bade8"/><path d="M5 9.800 L8.2 13 L14.2 6.400" fill="none" stroke="#fff" stroke-width="2.3" stroke-linecap="round" stroke-linejoin="round"/></svg>
<a class="u" id="t79" style="-webkit-text-stroke:0.3px;position:absolute;left:227.75px;top:1099.66px;line-height:24px;font-size:18px;font-weight:400;color:#333;white-space:nowrap;letter-spacing:0.500px;">Go-live</a>
<div style="position:absolute;left:15.60px;top:1138.40px;width:610.50px;height:53.40px;background:#f1f1f1;"></div>
<div style="position:absolute;left:15.60px;top:1138.40px;width:77.70px;height:51.20px;background:#f6f6f6;"></div>
<div style="position:absolute;left:94.60px;top:1138.40px;width:530.60px;height:51.20px;background:#f8f8f8;"></div>
<div style="position:absolute;left:93.30px;top:1138.40px;width:1.30px;height:53.40px;background:#e3e3e3;"></div>
<div style="position:absolute;left:625.60px;top:1138.40px;width:214.60px;height:53.40px;background:#eef6f8;"></div>
<div style="position:absolute;left:627.00px;top:1138.60px;width:213.20px;height:50.50px;background:#b8e0e6;"></div>
<span id="t80" style="-webkit-text-stroke:0.3px;position:absolute;left:54.70px;top:1152.76px;line-height:24px;font-size:18px;font-weight:400;color:#333;white-space:nowrap;letter-spacing:0.000px;transform:translateX(-50%);">4.3</span>
<span id="t81" style="-webkit-text-stroke:0.3px;position:absolute;left:642.00px;top:1153.36px;line-height:24px;font-size:18px;font-weight:400;color:#2d3b43;white-space:nowrap;letter-spacing:0.150px;">To Do</span>
<svg style="position:absolute;left:197.30px;top:1154.60px;" width="19.00" height="19.00" viewBox="0 0 19 19" preserveAspectRatio="none"><rect width="19" height="19" rx="3" fill="#4bade8"/><path d="M5 9.800 L8.2 13 L14.2 6.400" fill="none" stroke="#fff" stroke-width="2.3" stroke-linecap="round" stroke-linejoin="round"/></svg>
<a class="u" id="t82" style="-webkit-text-stroke:0.3px;position:absolute;left:227.75px;top:1153.06px;line-height:24px;font-size:18px;font-weight:400;color:#333;white-space:nowrap;letter-spacing:0.076px;">Conduct user training sessions</a>
<div style="position:absolute;left:15.60px;top:1191.80px;width:610.50px;height:53.40px;background:#f1f1f1;"></div>
<div style="position:absolute;left:15.60px;top:1191.80px;width:77.70px;height:51.20px;background:#f6f6f6;"></div>
<div style="position:absolute;left:94.60px;top:1191.80px;width:530.60px;height:51.20px;background:#f8f8f8;"></div>
<div style="position:absolute;left:93.30px;top:1191.80px;width:1.30px;height:53.40px;background:#e3e3e3;"></div>
<div style="position:absolute;left:625.60px;top:1191.80px;width:214.60px;height:53.40px;background:#eef6f8;"></div>
<div style="position:absolute;left:627.00px;top:1192.00px;width:213.20px;height:50.50px;background:#b8e0e6;"></div>
<svg style="position:absolute;left:197.30px;top:1208.00px;" width="19.00" height="19.00" viewBox="0 0 19 19" preserveAspectRatio="none"><rect width="19" height="19" rx="3" fill="#4bade8"/><path d="M5 9.800 L8.2 13 L14.2 6.400" fill="none" stroke="#fff" stroke-width="2.3" stroke-linecap="round" stroke-linejoin="round"/></svg>
<div style="position:absolute;left:849.00px;top:284.20px;width:1210.00px;height:53.20px;background:linear-gradient(90deg,#e7ecf9 0%,#e8edf8 40%,#e9eef2 70%,#eaf1ee 100%);"></div>
<div style="position:absolute;left:849.00px;top:337.40px;width:1210.00px;height:53.40px;background:#ffffff;"></div>
<div style="position:absolute;left:849.00px;top:388.20px;width:1210.00px;height:2.20px;background:#cdd8e6;"></div>
<div style="position:absolute;left:849.00px;top:390.20px;width:1210.00px;height:0.80px;background:#f2f4f8;"></div>
<div style="position:absolute;left:849.00px;top:390.80px;width:1210.00px;height:53.40px;background:#f6f6f6;"></div>
<div style="position:absolute;left:849.00px;top:442.40px;width:1210.00px;height:1.40px;background:#e6e7ea;"></div>
<div style="position:absolute;left:849.00px;top:444.20px;width:1210.00px;height:53.40px;background:#f6f6f6;"></div>
<div style="position:absolute;left:849.00px;top:495.80px;width:1210.00px;height:1.40px;background:#e6e7ea;"></div>
<div style="position:absolute;left:849.00px;top:497.60px;width:1210.00px;height:53.40px;background:#f6f6f6;"></div>
<div style="position:absolute;left:849.00px;top:549.20px;width:1210.00px;height:1.40px;background:#e6e7ea;"></div>
<div style="position:absolute;left:849.00px;top:551.00px;width:1210.00px;height:53.40px;background:#ffffff;"></div>
<div style="position:absolute;left:849.00px;top:601.80px;width:1210.00px;height:2.20px;background:#cdd8e6;"></div>
<div style="position:absolute;left:849.00px;top:603.80px;width:1210.00px;height:0.80px;background:#f2f4f8;"></div>
<div style="position:absolute;left:849.00px;top:604.40px;width:1210.00px;height:53.40px;background:#f6f6f6;"></div>
<div style="position:absolute;left:849.00px;top:656.00px;width:1210.00px;height:1.40px;background:#e6e7ea;"></div>
<div style="position:absolute;left:849.00px;top:657.80px;width:1210.00px;height:53.40px;background:#f6f6f6;"></div>
<div style="position:absolute;left:849.00px;top:709.40px;width:1210.00px;height:1.40px;background:#e6e7ea;"></div>
<div style="position:absolute;left:849.00px;top:711.20px;width:1210.00px;height:53.40px;background:#f6f6f6;"></div>
<div style="position:absolute;left:849.00px;top:762.80px;width:1210.00px;height:1.40px;background:#e6e7ea;"></div>
<div style="position:absolute;left:849.00px;top:764.60px;width:1210.00px;height:53.40px;background:#ffffff;"></div>
<div style="position:absolute;left:849.00px;top:815.40px;width:1210.00px;height:2.20px;background:#cdd8e6;"></div>
<div style="position:absolute;left:849.00px;top:817.40px;width:1210.00px;height:0.80px;background:#f2f4f8;"></div>
<div style="position:absolute;left:849.00px;top:818.00px;width:1210.00px;height:53.40px;background:#f6f6f6;"></div>
<div style="position:absolute;left:849.00px;top:869.60px;width:1210.00px;height:1.40px;background:#e6e7ea;"></div>
<div style="position:absolute;left:849.00px;top:871.40px;width:1210.00px;height:53.40px;background:#f6f6f6;"></div>
<div style="position:absolute;left:849.00px;top:923.00px;width:1210.00px;height:1.40px;background:#e6e7ea;"></div>
<div style="position:absolute;left:849.00px;top:924.80px;width:1210.00px;height:53.40px;background:#f6f6f6;"></div>
<div style="position:absolute;left:849.00px;top:976.40px;width:1210.00px;height:1.40px;background:#e6e7ea;"></div>
<div style="position:absolute;left:849.00px;top:978.20px;width:1210.00px;height:53.40px;background:#ffffff;"></div>
<div style="position:absolute;left:849.00px;top:1029.00px;width:1210.00px;height:2.20px;background:#cdd8e6;"></div>
<div style="position:absolute;left:849.00px;top:1031.00px;width:1210.00px;height:0.80px;background:#f2f4f8;"></div>
<div style="position:absolute;left:849.00px;top:1031.60px;width:1210.00px;height:53.40px;background:#f6f6f6;"></div>
<div style="position:absolute;left:849.00px;top:1083.20px;width:1210.00px;height:1.40px;background:#e6e7ea;"></div>
<div style="position:absolute;left:849.00px;top:1085.00px;width:1210.00px;height:53.40px;background:#f6f6f6;"></div>
<div style="position:absolute;left:849.00px;top:1136.60px;width:1210.00px;height:1.40px;background:#e6e7ea;"></div>
<div style="position:absolute;left:849.00px;top:1138.40px;width:1210.00px;height:53.40px;background:#f6f6f6;"></div>
<div style="position:absolute;left:849.00px;top:1190.00px;width:1210.00px;height:1.40px;background:#e6e7ea;"></div>
<div style="position:absolute;left:849.00px;top:1191.80px;width:1210.00px;height:53.40px;background:#f6f6f6;"></div>
<div style="position:absolute;left:849.00px;top:1243.40px;width:1210.00px;height:1.40px;background:#e6e7ea;"></div>
<div style="position:absolute;left:936.00px;top:264.20px;width:1.00px;height:20.00px;background:rgba(150,165,190,0.2);"></div>
<div style="position:absolute;left:936.00px;top:284.20px;width:1.00px;height:53.20px;background:rgba(205,210,222,0.42);"></div>
<div style="position:absolute;left:936.00px;top:337.40px;width:1.00px;height:880.00px;background:rgba(205,209,218,0.45);"></div>
<div style="position:absolute;left:1096.00px;top:264.20px;width:1.00px;height:20.00px;background:rgba(150,165,190,0.2);"></div>
<div style="position:absolute;left:1096.00px;top:284.20px;width:1.00px;height:53.20px;background:rgba(205,210,222,0.42);"></div>
<div style="position:absolute;left:1096.00px;top:337.40px;width:1.00px;height:880.00px;background:rgba(205,209,218,0.45);"></div>
<div style="position:absolute;left:1256.00px;top:264.20px;width:1.00px;height:20.00px;background:rgba(150,165,190,0.2);"></div>
<div style="position:absolute;left:1256.00px;top:284.20px;width:1.00px;height:53.20px;background:rgba(205,210,222,0.42);"></div>
<div style="position:absolute;left:1256.00px;top:337.40px;width:1.00px;height:880.00px;background:rgba(205,209,218,0.45);"></div>
<div style="position:absolute;left:1416.00px;top:264.20px;width:1.00px;height:20.00px;background:rgba(150,165,190,0.2);"></div>
<div style="position:absolute;left:1416.00px;top:284.20px;width:1.00px;height:53.20px;background:rgba(205,210,222,0.42);"></div>
<div style="position:absolute;left:1416.00px;top:337.40px;width:1.00px;height:880.00px;background:rgba(205,209,218,0.45);"></div>
<div style="position:absolute;left:1577.00px;top:264.20px;width:1.00px;height:20.00px;background:rgba(150,165,190,0.2);"></div>
<div style="position:absolute;left:1577.00px;top:284.20px;width:1.00px;height:53.20px;background:rgba(205,210,222,0.42);"></div>
<div style="position:absolute;left:1577.00px;top:337.40px;width:1.00px;height:880.00px;background:rgba(205,209,218,0.45);"></div>
<div style="position:absolute;left:1737.00px;top:264.20px;width:1.00px;height:20.00px;background:rgba(150,165,190,0.2);"></div>
<div style="position:absolute;left:1737.00px;top:284.20px;width:1.00px;height:53.20px;background:rgba(205,210,222,0.42);"></div>
<div style="position:absolute;left:1737.00px;top:337.40px;width:1.00px;height:880.00px;background:rgba(205,209,218,0.45);"></div>
<div style="position:absolute;left:1897.00px;top:264.20px;width:1.00px;height:20.00px;background:rgba(150,165,190,0.2);"></div>
<div style="position:absolute;left:1897.00px;top:284.20px;width:1.00px;height:53.20px;background:rgba(205,210,222,0.42);"></div>
<div style="position:absolute;left:1897.00px;top:337.40px;width:1.00px;height:880.00px;background:rgba(205,209,218,0.45);"></div>
<div style="position:absolute;left:2057.00px;top:264.20px;width:1.00px;height:20.00px;background:rgba(150,165,190,0.2);"></div>
<div style="position:absolute;left:2057.00px;top:284.20px;width:1.00px;height:53.20px;background:rgba(205,210,222,0.42);"></div>
<div style="position:absolute;left:2057.00px;top:337.40px;width:1.00px;height:880.00px;background:rgba(205,209,218,0.45);"></div>
<div style="position:absolute;left:849.00px;top:341.60px;width:408.20px;height:42px;background:#6fab86;border:1px solid #66a17c;border-left:none;border-radius:0 7px 7px 0"></div>
<svg style="position:absolute;left:859.70px;top:355.30px;overflow:visible" width="17.50" height="17.50" viewBox="0 0 512 512" preserveAspectRatio="none"><path fill="#111" d="M464 128H272l-64-64H48C21.490 64 0 85.490 0 112v288c0 26.510 21.490 48 48 48h416c26.510 0 48-21.490 48-48V176c0-26.510-21.490-48-48-48z"/></svg>
<span id="t83" style="-webkit-text-stroke:0.3px;position:absolute;left:890.00px;top:353.86px;line-height:24px;font-size:18px;font-weight:400;color:#151515;white-space:nowrap;letter-spacing:0.162px;">Requirements Gathering &amp; Planning</span>
<div style="position:absolute;left:849.00px;top:395.00px;width:344.30px;height:42px;background:#6fab86;border:1px solid #66a17c;border-left:none;border-radius:0 7px 7px 0"></div>
<span id="t84" style="-webkit-text-stroke:0.3px;position:absolute;left:855.50px;top:407.26px;line-height:24px;font-size:18px;font-weight:400;color:#151515;white-space:nowrap;letter-spacing:0.319px;">Evaluate potential ticketing solutions</span>
<div style="position:absolute;left:1001.10px;top:448.40px;width:256.10px;height:42px;background:#6fab86;border:1px solid #66a17c;border-radius:7px"></div>
<span id="t85" style="-webkit-text-stroke:0.3px;position:absolute;left:1015.50px;top:460.66px;line-height:24px;font-size:18px;font-weight:400;color:#151515;white-space:nowrap;letter-spacing:0.107px;">Define project scope and t...</span>
<div style="position:absolute;left:1180.20px;top:509.10px;width:26px;height:26px;background:#6fab86;border:1px solid #66a17c;border-radius:3px;transform:rotate(45deg)"></div>
<span id="t86" style="-webkit-text-stroke:0.3px;position:absolute;left:1219.50px;top:509.56px;line-height:24px;font-size:18px;font-weight:400;color:#333;white-space:nowrap;letter-spacing:0.362px;">Meet With Stakeholders</span>
<div style="position:absolute;left:1257.60px;top:555.20px;width:320.00px;height:42px;background:#f0d586;border:1px solid #b9a97c;border-radius:7px"></div>
<svg style="position:absolute;left:1277.30px;top:568.90px;overflow:visible" width="17.50" height="17.50" viewBox="0 0 512 512" preserveAspectRatio="none"><path fill="#222" d="M464 128H272l-64-64H48C21.490 64 0 85.490 0 112v288c0 26.510 21.490 48 48 48h416c26.510 0 48-21.490 48-48V176c0-26.510-21.490-48-48-48z"/></svg>
<span id="t87" style="-webkit-text-stroke:0.3px;position:absolute;left:1308.00px;top:567.46px;line-height:24px;font-size:18px;font-weight:400;color:#333;white-space:nowrap;letter-spacing:0.155px;">System Setup &amp; Configuration</span>
<div style="position:absolute;left:1257.60px;top:608.60px;width:159.80px;height:42px;background:#6fab86;border:1px solid #66a17c;border-radius:7px"></div>
<span id="t88" style="-webkit-text-stroke:0.3px;position:absolute;left:1272.00px;top:620.86px;line-height:24px;font-size:18px;font-weight:400;color:#151515;white-space:nowrap;letter-spacing:-0.134px;">Set up develo...</span>
<div style="position:absolute;left:1257.60px;top:662.00px;width:287.80px;height:42px;background:#f0d586;border:1px solid #b9a97c;border-radius:7px"></div>
<span id="t89" style="-webkit-text-stroke:0.3px;position:absolute;left:1272.00px;top:674.26px;line-height:24px;font-size:18px;font-weight:400;color:#333;white-space:nowrap;letter-spacing:-0.081px;">Set up user roles and permissi...</span>
<div style="position:absolute;left:1257.60px;top:715.40px;width:287.80px;height:42px;background:#f0d586;border:1px solid #b9a97c;border-radius:7px"></div>
<span id="t90" style="-webkit-text-stroke:0.3px;position:absolute;left:1272.00px;top:727.66px;line-height:24px;font-size:18px;font-weight:400;color:#333;white-space:nowrap;letter-spacing:0.234px;">Customize workflows and fields</span>
<div style="position:absolute;left:1578.00px;top:768.80px;width:492.00px;height:42px;background:#f0d586;border:1px solid #b9a97c;border-radius:7px 0 0 7px"></div>
<svg style="position:absolute;left:1597.70px;top:782.50px;overflow:visible" width="17.50" height="17.50" viewBox="0 0 512 512" preserveAspectRatio="none"><path fill="#222" d="M464 128H272l-64-64H48C21.490 64 0 85.490 0 112v288c0 26.510 21.490 48 48 48h416c26.510 0 48-21.490 48-48V176c0-26.510-21.490-48-48-48z"/></svg>
<span id="t91" style="-webkit-text-stroke:0.3px;position:absolute;left:1628.00px;top:781.06px;line-height:24px;font-size:18px;font-weight:400;color:#333;white-space:nowrap;letter-spacing:0.585px;">Data Migration</span>
<div style="position:absolute;left:1578.00px;top:822.20px;width:223.30px;height:42px;background:#f0d586;border:1px solid #b9a97c;border-radius:7px"></div>
<span id="t92" style="-webkit-text-stroke:0.3px;position:absolute;left:1593.50px;top:834.46px;line-height:24px;font-size:18px;font-weight:400;color:#333;white-space:nowrap;letter-spacing:-0.017px;">Analyze existing data ...</span>
<div style="position:absolute;left:1852.80px;top:882.90px;width:26px;height:26px;background:#b8e0e6;border:1px solid #8db7bf;border-radius:3px;transform:rotate(45deg)"></div>
<span id="t93" style="-webkit-text-stroke:0.3px;position:absolute;left:1892.00px;top:883.36px;line-height:24px;font-size:18px;font-weight:400;color:#333;white-space:nowrap;letter-spacing:0.461px;">Perform test migration</span>
<div style="position:absolute;left:1898.20px;top:929.00px;width:171.80px;height:42px;background:#b8e0e6;border:1px solid #8db7bf;border-radius:7px 0 0 7px"></div>
<span id="t94" style="-webkit-text-stroke:0.3px;position:absolute;left:1912.00px;top:941.26px;line-height:24px;font-size:18px;font-weight:400;color:#2c3a40;white-space:nowrap;letter-spacing:0.209px;">Execute final data migration</span>
<div style="position:absolute;left:825.3px;top:269.2px;width:14.6px;height:628px;border-radius:7.3px;background:rgba(110,110,110,0.33)"></div>
<div style="position:absolute;left:94.8px;top:1196px;width:552px;height:14px;border-radius:7px;background:rgba(150,150,150,0.55)"></div>
<div style="position:absolute;left:1377px;top:1193.2px;width:374px;height:14.6px;border-radius:7.3px;background:#c4c4c4"></div>
<svg style="position:absolute;left:1383.50px;top:1195.50px;" width="9.00" height="10.00" viewBox="0 0 9 10" preserveAspectRatio="none"><path d="M8 0.5 V9.5 L1 5 Z" fill="#f4f4f4"/></svg>
<svg style="position:absolute;left:1735.00px;top:1195.50px;" width="9.00" height="10.00" viewBox="0 0 9 10" preserveAspectRatio="none"><path d="M1 0.5 V9.5 L8 5 Z" fill="#f4f4f4"/></svg>
<div style="position:absolute;left:1556.60px;top:1196.20px;width:2.20px;height:8.60px;background:#f4f4f4;"></div>
<div style="position:absolute;left:1562.20px;top:1196.20px;width:2.20px;height:8.60px;background:#f4f4f4;"></div>
<div style="position:absolute;left:1567.80px;top:1196.20px;width:2.20px;height:8.60px;background:#f4f4f4;"></div>
<div style="position:absolute;left:0.00px;top:1209.60px;width:2048.00px;height:48.00px;background:#fff;box-shadow:0 -1px 2px rgba(0,0,0,0.14);"></div>
<div style="position:absolute;left:422.60px;top:1209.60px;width:220.80px;height:48.00px;background:#e8eefb;"></div>
<div style="position:absolute;left:152.60px;top:1209.60px;width:1.30px;height:48.00px;background:#d2d2d2;"></div>
<div style="position:absolute;left:422.00px;top:1209.60px;width:1.30px;height:48.00px;background:#d2d2d2;"></div>
<div style="position:absolute;left:643.20px;top:1209.60px;width:1.30px;height:48.00px;background:#d2d2d2;"></div>
<div style="position:absolute;left:896.20px;top:1209.60px;width:1.30px;height:48.00px;background:#d2d2d2;"></div>
<div style="position:absolute;left:1127.80px;top:1209.60px;width:1.30px;height:48.00px;background:#d2d2d2;"></div>
<div style="position:absolute;left:1410.40px;top:1209.60px;width:1.30px;height:48.00px;background:#d2d2d2;"></div>
<div style="position:absolute;left:1632.60px;top:1209.60px;width:1.30px;height:48.00px;background:#d2d2d2;"></div>
<div style="position:absolute;left:6.9px;top:1218.5px;width:129.2px;height:33.8px;border:1.5px solid #4c80d2;border-radius:6px;background:#fff"></div>
<svg style="position:absolute;left:15.80px;top:1227.20px;" width="16.20" height="16.20" viewBox="0 0 16 16" preserveAspectRatio="none"><path d="M8 1 V15 M1 8 H15" stroke="#3c7fdd" stroke-width="2.4" stroke-linecap="round"/></svg>
<span id="t95" style="-webkit-text-stroke:0.3px;position:absolute;left:50.75px;top:1223.92px;line-height:24px;font-size:18.4px;font-weight:400;color:#3f7ccc;white-space:nowrap;letter-spacing:-0.086px;">Add view</span>
<svg style="position:absolute;left:165.40px;top:1226.20px;" width="18.60" height="16.00" viewBox="0 0 18.6 16" preserveAspectRatio="none"><rect width="18.6" height="16" rx="2.2" fill="#222"/><rect x="2.2" y="4.4" width="6" height="3.6" fill="#fff"/><rect x="10.4" y="4.4" width="6" height="3.6" fill="#fff"/><rect x="2.2" y="10.2" width="6" height="3.6" fill="#fff"/><rect x="10.4" y="10.2" width="6" height="3.6" fill="#fff"/></svg>
<span id="t96" style="-webkit-text-stroke:0.3px;position:absolute;left:195.50px;top:1223.62px;line-height:24px;font-size:18.4px;font-weight:400;color:#6b6b6b;white-space:nowrap;letter-spacing:0.070px;">Project Task Overview</span>
<svg style="position:absolute;left:395.90px;top:1231.60px;" width="9.40" height="5.60" viewBox="0 0 10 6" preserveAspectRatio="none"><path d="M0.6 0 H9.4 Q10 0 9.6 0.5 L5.4 5.6 Q5 6 4.6 5.6 L0.4 0.5 Q0 0 0.6 0Z" fill="#bdbdbd"/></svg>
<svg style="position:absolute;left:433.80px;top:1227.40px;" width="21.00" height="14.00" viewBox="0 0 21 14" preserveAspectRatio="none"><rect x="0" y="0" width="11" height="2.9" rx="1.4" fill="#222"/><rect x="7.8" y="5.7" width="13" height="2.9" rx="1.4" fill="#222"/><rect x="13.2" y="11.2" width="7.6" height="2.9" rx="1.4" fill="#222"/></svg>
<span id="t97" style="-webkit-text-stroke:0.3px;position:absolute;left:464.50px;top:1223.62px;line-height:24px;font-size:18.4px;font-weight:400;color:#6b6b6b;white-space:nowrap;letter-spacing:0.280px;">Project Timeline</span>
<svg style="position:absolute;left:616.70px;top:1231.60px;" width="9.40" height="5.60" viewBox="0 0 10 6" preserveAspectRatio="none"><path d="M0.6 0 H9.4 Q10 0 9.6 0.5 L5.4 5.6 Q5 6 4.6 5.6 L0.4 0.5 Q0 0 0.6 0Z" fill="#bdc4d4"/></svg>
<svg style="position:absolute;left:654.60px;top:1227.40px;" width="21.20" height="14.00" viewBox="0 0 21.2 14" preserveAspectRatio="none"><rect x="0" y="0" width="10.4" height="2.9" rx="1.4" fill="#222"/><rect x="12.6" y="0" width="8.6" height="2.9" rx="1.4" fill="#222"/><rect x="6.4" y="5.700" width="14.8" height="2.9" rx="1.4" fill="#222"/><rect x="2.4" y="11.2" width="8" height="2.9" rx="1.4" fill="#222"/></svg>
<span id="t98" style="-webkit-text-stroke:0.3px;position:absolute;left:685.00px;top:1223.62px;line-height:24px;font-size:18.4px;font-weight:400;color:#6b6b6b;white-space:nowrap;letter-spacing:-0.066px;">Project Schedule</span>
<div style="position:absolute;left:836.4px;top:1225.4px;width:18px;height:18px;border-radius:9px;background:#d0d0d0"></div>
<span id="t99" style="position:absolute;left:845.40px;top:1223.38px;line-height:24px;font-size:14.5px;font-weight:700;color:#fff;white-space:nowrap;letter-spacing:0.000px;transform:translateX(-50%);">?</span>
<svg style="position:absolute;left:870.30px;top:1231.60px;" width="9.40" height="5.60" viewBox="0 0 10 6" preserveAspectRatio="none"><path d="M0.6 0 H9.4 Q10 0 9.6 0.5 L5.4 5.6 Q5 6 4.6 5.6 L0.4 0.5 Q0 0 0.6 0Z" fill="#bdbdbd"/></svg>
<svg style="position:absolute;left:908.90px;top:1225.10px;" width="19.00" height="18.50" viewBox="0 0 19 18.5" preserveAspectRatio="none"><rect x="0" y="0" width="8.8" height="3.6" rx="1.4" fill="#2a2c31"/><rect x="0" y="5.4" width="8.8" height="13.1" rx="1.4" fill="#2a2c31"/><rect x="11.1" y="0" width="7.9" height="10.4" rx="1.4" fill="#2a2c31"/><rect x="11.1" y="12.4" width="7.9" height="6.1" rx="1.4" fill="#2a2c31"/></svg>
<span id="t100" style="-webkit-text-stroke:0.3px;position:absolute;left:940.00px;top:1223.62px;line-height:24px;font-size:18.4px;font-weight:400;color:#6b6b6b;white-space:nowrap;letter-spacing:-0.287px;">Task Status Board</span>
<svg style="position:absolute;left:1101.50px;top:1231.60px;" width="9.40" height="5.60" viewBox="0 0 10 6" preserveAspectRatio="none"><path d="M0.6 0 H9.4 Q10 0 9.6 0.5 L5.4 5.6 Q5 6 4.6 5.6 L0.4 0.5 Q0 0 0.6 0Z" fill="#bdbdbd"/></svg>
<svg style="position:absolute;left:1140.80px;top:1226.20px;" width="18.60" height="16.00" viewBox="0 0 18.6 16" preserveAspectRatio="none"><rect width="18.6" height="16" rx="2.2" fill="#222"/><rect x="2.2" y="4.4" width="6" height="3.6" fill="#fff"/><rect x="10.4" y="4.4" width="6" height="3.6" fill="#fff"/><rect x="2.2" y="10.2" width="6" height="3.6" fill="#fff"/><rect x="10.4" y="10.2" width="6" height="3.6" fill="#fff"/></svg>
<span id="t101" style="-webkit-text-stroke:0.3px;position:absolute;left:1171.25px;top:1223.62px;line-height:24px;font-size:18.4px;font-weight:400;color:#6b6b6b;white-space:nowrap;letter-spacing:-0.191px;">Assignee Task Overview</span>
<svg style="position:absolute;left:1383.50px;top:1231.60px;" width="9.40" height="5.60" viewBox="0 0 10 6" preserveAspectRatio="none"><path d="M0.6 0 H9.4 Q10 0 9.6 0.5 L5.4 5.6 Q5 6 4.6 5.6 L0.4 0.5 Q0 0 0.6 0Z" fill="#bdbdbd"/></svg>
<svg style="position:absolute;left:1421.80px;top:1224.40px;" width="21.00" height="20.00" viewBox="0 0 544 512" preserveAspectRatio="none"><path fill="#222" d="M527.790 288H290.500l158.030 158.030c6.040 6.040 15.980 6.530 22.190.680 38.700-36.460 65.320-85.610 73.130-140.860 1.340-9.460-6.510-17.850-16.060-17.850zm-15.830-64.800C503.720 103.740 408.260 8.280 288.800.040 279.680-.590 272 7.100 272 16.240V240h223.770c9.140 0 16.820-7.680 16.190-16.800zM224 288V50.710c0-9.550-8.390-17.400-17.840-16.060C86.990 51.490-4.100 155.600.140 280.370 4.500 408.510 114.830 513.590 243.030 511.980c50.400-.630 96.970-16.870 135.260-44.030 7.900-5.600 8.420-17.230 1.570-24.080L224 288z"/></svg>
<span id="t102" style="-webkit-text-stroke:0.3px;position:absolute;left:1453.50px;top:1223.62px;line-height:24px;font-size:18.4px;font-weight:400;color:#6b6b6b;white-space:nowrap;letter-spacing:0.124px;">Dashboard View</span>
<svg style="position:absolute;left:1605.50px;top:1231.60px;" width="9.40" height="5.60" viewBox="0 0 10 6" preserveAspectRatio="none"><path d="M0.6 0 H9.4 Q10 0 9.6 0.5 L5.4 5.6 Q5 6 4.6 5.6 L0.4 0.5 Q0 0 0.6 0Z" fill="#bdbdbd"/></svg>
</div></body></html>
